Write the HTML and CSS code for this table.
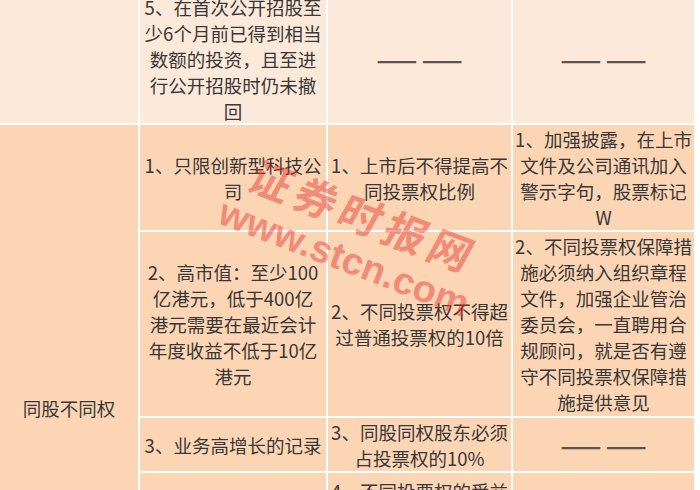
FILE: index.html
```html
<!DOCTYPE html>
<html lang="zh-CN">
<head>
<meta charset="utf-8">
<title>同股不同权</title>
<link rel="stylesheet" href="styles.css">
</head>
<body>
<div class="viewport">
  <div class="sheet">
    <div class="cell light"></div>
    <div class="cell light">5、在首次公开招股至<br>少6个月前已得到相当<br>数额的投资，且至进<br>行公开招股时仍未撤<br>回</div>
    <div class="cell light"><span class="dash">—— ——</span></div>
    <div class="cell light"><span class="dash">—— ——</span></div>

    <div class="cell rowspan">同股不同权</div>
    <div class="cell">1、只限创新型科技公<br>司</div>
    <div class="cell">1、上市后不得提高不<br>同投票权比例</div>
    <div class="cell">1、加强披露，在上市<br>文件及公司通讯加入<br>警示字句，股票标记<br>W</div>

    <div class="cell">2、高市值：至少100<br>亿港元，低于400亿<br>港元需要在最近会计<br>年度收益不低于10亿<br>港元</div>
    <div class="cell">2、不同投票权不得超<br>过普通投票权的10倍</div>
    <div class="cell">2、不同投票权保障措<br>施必须纳入组织章程<br>文件，加强企业管治<br>委员会，一直聘用合<br>规顾问，就是否有遵<br>守不同投票权保障措<br>施提供意见</div>

    <div class="cell">3、业务高增长的记录</div>
    <div class="cell">3、同股同权股东必须<br>占投票权的10%</div>
    <div class="cell"><span class="dash">—— ——</span></div>

    <div class="cell"></div>
    <div class="cell top">4、不同投票权的受益<br>人必须为董事</div>
    <div class="cell"></div>
  </div>
  <div class="wm wm-cn">证券时报网</div>
  <div class="wm wm-en">www.stcn.com</div>
</div>
</body>
</html>
```
FILE: styles.css
```css
html, body {
  margin: 0;
  padding: 0;
  background: #ffffff;
}

.viewport {
  position: relative;
  width: 700px;
  height: 490px;
  overflow: hidden;
  font-family: "Noto Sans CJK SC", "Noto Sans", sans-serif;
}

.sheet {
  display: grid;
  grid-template-columns: 138px 186px 183px 181px;
  grid-template-rows: 128px 105px 184px 53px 217px;
  gap: 2px;
  width: 694px;
  margin-top: -5px;
  background: #ffffff;
}

.cell {
  display: flex;
  align-items: center;
  justify-content: center;
  text-align: center;
  white-space: nowrap;
  background: #fcd5b4;
  color: #383838;
  font-size: 18.5px;
  line-height: 26px;
}

.cell.light {
  background: #fde9da;
}

.cell.rowspan {
  grid-row: 2 / span 4;
}

.cell.top {
  align-items: flex-start;
  padding-top: 5px;
}

.dash {
  font-weight: 700;
  color: #5a5550;
  font-size: 24px;
  word-spacing: -1px;
}

.wm {
  position: absolute;
  text-align: center;
  white-space: nowrap;
  color: rgba(228, 45, 45, 0.45);
  transform-origin: center center;
  pointer-events: none;
}

.wm-cn {
  left: 240px;
  top: 185px;
  width: 250px;
  line-height: 60px;
  font-size: 42px;
  font-weight: 700;
  letter-spacing: 6px;
  transform: rotate(21deg) skewX(-8deg);
}

.wm-en {
  left: 212px;
  top: 232px;
  width: 260px;
  line-height: 50px;
  font-family: "Liberation Sans", "DejaVu Sans", sans-serif;
  font-size: 38px;
  font-weight: 700;
  transform: rotate(21deg);
}
```
